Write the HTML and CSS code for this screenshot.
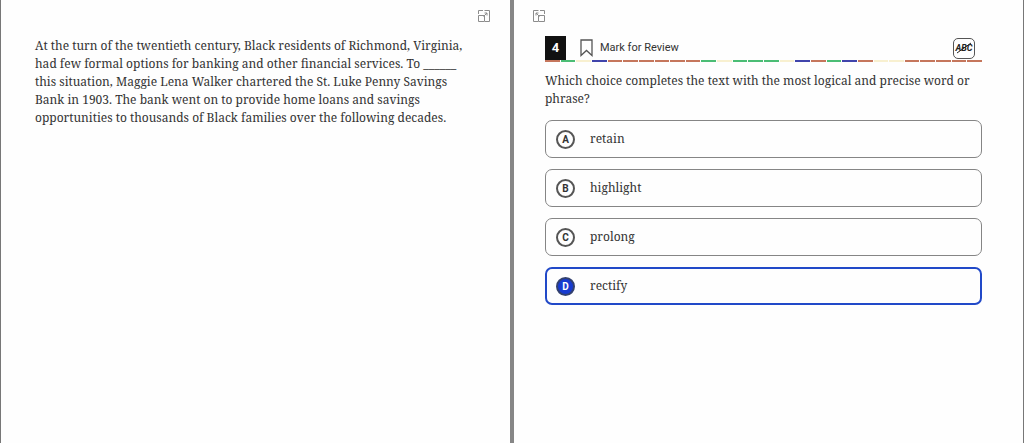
FILE: index.html
```html
<!DOCTYPE html>
<html lang="en">
<head>
<meta charset="utf-8">
<meta name="viewport" content="width=device-width, initial-scale=1">
<title>Question 4</title>
<link rel="stylesheet" href="styles.css">
</head>
<body>
<main class="split">
  <section class="pane passage">
    <div class="pane-tools pane-tools-end">
      <button class="resize" type="button" aria-label="Expand passage">
        <svg viewBox="0 0 14 14" width="14" height="14" fill="none" stroke="currentColor"><path d="M1.500 5V1.500H6M7.500 1.500h5v11H8M1.500 6.500h6v6h-6zM6.500 7.500L10 4M7.500 4H10v2.500"/></svg>
      </button>
    </div>
    <p class="passage-text">At the turn of the twentieth century, Black residents of Richmond, Virginia, had few formal options for banking and other financial services. To ______ this situation, Maggie Lena Walker chartered the St. Luke Penny Savings Bank in 1903. The bank went on to provide home loans and savings opportunities to thousands of Black families over the following decades.</p>
  </section>
  <div class="divider"></div>
  <section class="pane question">
    <div class="pane-tools">
      <button class="resize" type="button" aria-label="Expand question">
        <svg viewBox="0 0 14 14" width="14" height="14" fill="none" stroke="currentColor"><path d="M12.500 5V1.500H8M6.500 1.500h-5v11H6M6.500 6.500h6v6h-6zM7.500 7.500L4 4M6.500 4H4v2.500"/></svg>
      </button>
    </div>
    <div class="question-body">
      <header class="bar">
        <span class="number">4</span>
        <button class="mark" type="button">
          <svg viewBox="0 0 13 18" width="13" height="18" fill="none" stroke="#555" stroke-width="1.300"><path d="M1 1h11v15.500l-5.500-5-5.500 5z"/></svg>
          Mark for Review
        </button>
        <button class="eliminate" type="button" aria-label="Cross out answers">
          <span class="abc">ABC</span>
          <svg class="strike" viewBox="0 0 20 18" width="20" height="18" fill="none" stroke="#222"><path d="M3 14L17 4"/></svg>
        </button>
      </header>
      <div class="dashes">
        <i class="red"></i><i class="green"></i><i class="cream"></i><i class="blue"></i><i class="red"></i><i class="red"></i><i class="red"></i>
        <i class="red"></i><i class="red"></i><i class="red"></i><i class="green"></i><i class="cream"></i><i class="green"></i><i class="green"></i>
        <i class="green"></i><i class="cream"></i><i class="blue"></i><i class="red"></i><i class="green"></i><i class="blue"></i><i class="red"></i>
        <i class="cream"></i><i class="cream"></i><i class="red"></i><i class="red"></i><i class="red"></i><i class="red"></i><i class="red"></i>
      </div>
      <fieldset class="choices">
        <legend class="prompt">Which choice completes the text with the most logical and precise word or phrase?</legend>
        <label class="choice"><input class="radio" type="radio" name="answer" value="A"><span class="letter">A</span>retain</label>
        <label class="choice"><input class="radio" type="radio" name="answer" value="B"><span class="letter">B</span>highlight</label>
        <label class="choice"><input class="radio" type="radio" name="answer" value="C"><span class="letter">C</span>prolong</label>
        <label class="choice"><input class="radio" type="radio" name="answer" value="D" checked><span class="letter">D</span>rectify</label>
      </fieldset>
    </div>
  </section>
</main>
</body>
</html>
```
FILE: styles.css
```css
* { box-sizing: border-box; }
body {
  margin: 0;
  background: #fefefe;
  color: #333;
  font-family: "Noto Serif", "DejaVu Serif", serif;
  font-size: 12px;
  line-height: 18px;
}
button {
  margin: 0;
  padding: 0;
  border: 0;
  background: none;
  color: inherit;
  cursor: pointer;
}
svg { display: block; }
.split {
  display: grid;
  grid-template-columns: 1fr 4px 1fr;
  min-height: 100vh;
  border: solid #777;
  border-width: 0 1px;
}
.divider { background: #868686; }
.passage { padding: 0 19px 0 34px; }
.question { padding: 0 41px 0 31px; }
.pane-tools { display: flex; padding-top: 9px; }
.pane-tools-end { justify-content: flex-end; }
.question .pane-tools { margin-left: -13px; }
.resize { color: #8c8c8c; }
.passage-text { margin: 14px 25px 0 0; }
.question-body { padding-top: 13px; }
.bar { display: flex; align-items: center; height: 24px; }
.number {
  width: 21px;
  height: 24px;
  background: #111;
  color: #fff;
  font: bold 13px/23px Roboto, sans-serif;
  text-align: center;
}
.mark {
  display: flex;
  align-items: center;
  gap: 7px;
  margin-left: 14px;
  font: 11px/18px Roboto, sans-serif;
}
.eliminate {
  display: grid;
  place-items: center;
  width: 22px;
  height: 21px;
  margin: 0 7px 0 auto;
  border: 1px solid #555;
  border-radius: 5px;
}
.abc, .strike { grid-area: 1 / 1; }
.abc {
  color: #222;
  font: italic bold 9px/18px Roboto, sans-serif;
}
.dashes {
  display: grid;
  grid-template-columns: repeat(28, 1fr);
  gap: 1px;
  height: 2px;
}
.red { background: #c5765c; }
.green { background: #4bbd75; }
.cream { background: #f8f0d0; }
.blue { background: #4044ab; }
.choices {
  display: flex;
  flex-direction: column;
  gap: 11px;
  min-width: 0;
  margin: 0;
  padding: 0;
  border: 0;
}
.prompt { padding: 10px 0 12px; }
.choice {
  display: flex;
  align-items: center;
  gap: 15px;
  height: 38px;
  padding: 0 10px;
  border: 1px solid #858585;
  border-radius: 7px;
  cursor: pointer;
}
.radio { position: absolute; opacity: 0; }
.letter {
  width: 19px;
  height: 19px;
  border: 2px solid #555;
  border-radius: 50%;
  font: bold 10px/15px Roboto, sans-serif;
  text-align: center;
}
.choice:has(.radio:checked) {
  padding: 0 9px;
  border: 2px solid #2149c8;
}
.radio:checked + .letter {
  border-color: #33416f;
  background: #173bd0;
  color: #fff;
}
```
